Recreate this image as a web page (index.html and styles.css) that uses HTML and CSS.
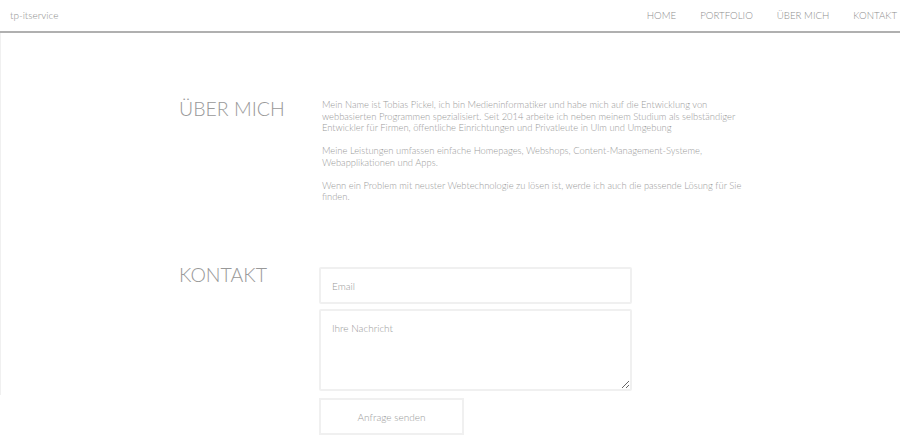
FILE: index.html
```html
<!DOCTYPE html>
<html lang="de">
<head>
<meta charset="utf-8">
<title>tp-itservice</title>
<link rel="stylesheet" href="styles.css">
</head>
<body>
<header class="topbar">
  <a class="brand" href="#">tp-itservice</a>
  <nav class="nav">
    <a href="#">HOME</a>
    <a href="#">PORTFOLIO</a>
    <a href="#">ÜBER MICH</a>
    <a href="#">KONTAKT</a>
  </nav>
</header>
<div class="page">
  <section class="row about">
    <h2 class="title">ÜBER MICH</h2>
    <div class="text">
      <p>Mein Name ist Tobias Pickel, ich bin Medieninformatiker und habe mich auf die Entwicklung von<br>webbasierten Programmen spezialisiert. Seit 2014 arbeite ich neben meinem Studium als selbständiger<br>Entwickler für Firmen, öffentliche Einrichtungen und Privatleute in Ulm und Umgebung</p>
      <p>Meine Leistungen umfassen einfache Homepages, Webshops, Content-Management-Systeme,<br>Webapplikationen und Apps.</p>
      <p>Wenn ein Problem mit neuster Webtechnologie zu lösen ist, werde ich auch die passende Lösung für Sie<br>finden.</p>
    </div>
  </section>
  <section class="row contact">
    <h2 class="title">KONTAKT</h2>
    <form class="form">
      <input class="field" type="email" placeholder="Email">
      <textarea class="field area" placeholder="Ihre Nachricht"></textarea>
      <button class="send" type="button">Anfrage senden</button>
    </form>
  </section>
</div>
</body>
</html>
```
FILE: styles.css
```css
* { box-sizing: border-box; }
html, body { margin: 0; padding: 0; background: #fff; }
body {
  font-family: Lato, "Open Sans", sans-serif;
  font-weight: 300;
  color: #a9a9a9;
}
a { text-decoration: none; color: inherit; }
.topbar {
  height: 33px;
  display: flex;
  align-items: center;
  justify-content: space-between;
  padding: 0 3px 2px 10px;
  border-bottom: 2px solid #b0b0b0;
}
.brand { font-size: 10px; color: #8e8e8e; font-weight: 300; }
.nav { display: flex; gap: 24px; }
.nav a { font-size: 9.7px; color: #8e8e8e; font-weight: 300; }
.page {
  position: relative;
  padding-bottom: 10px;
}
.page::before {
  content: "";
  position: absolute;
  left: 0;
  top: 0;
  width: 1px;
  height: 362px;
  background: #f0f0f0;
}
.row {
  display: flex;
  padding-left: 179px;
}
.title {
  margin: 0;
  width: 143px;
  flex: none;
  font-size: 19.5px;
  font-weight: 300;
  color: #999;
}
.about { padding-top: 64px; }
.about .title { line-height: 24px; }
.text { width: 440px; font-size: 9.4px; line-height: 11.5px; padding-top: 2px; font-weight: 300; color: #9a9a9a; }
.text p { margin: 0 0 11.5px; white-space: nowrap; }
.contact { padding-top: 53px; }
.contact .title { width: 140px; line-height: 24px; margin-top: -4px; }
.form { display: flex; flex-direction: column; gap: 5px; width: 313px; }
.field {
  font-family: inherit;
  font-weight: 300;
  font-size: 10px;
  color: #999;
  border: 2px solid #f0f0f0;
  border-radius: 2px;
  padding: 0 11px;
  height: 37px;
  outline: none;
}
.field::placeholder { color: #999; }
.area { height: 82px; padding-top: 11px; resize: vertical; }
.send {
  margin-top: 2px;
  width: 145px;
  height: 37px;
  background: #fff;
  border: 2px solid #f0f0f0;
  font-family: inherit;
  font-weight: 300;
  font-size: 10px;
  color: #999;
}
```
